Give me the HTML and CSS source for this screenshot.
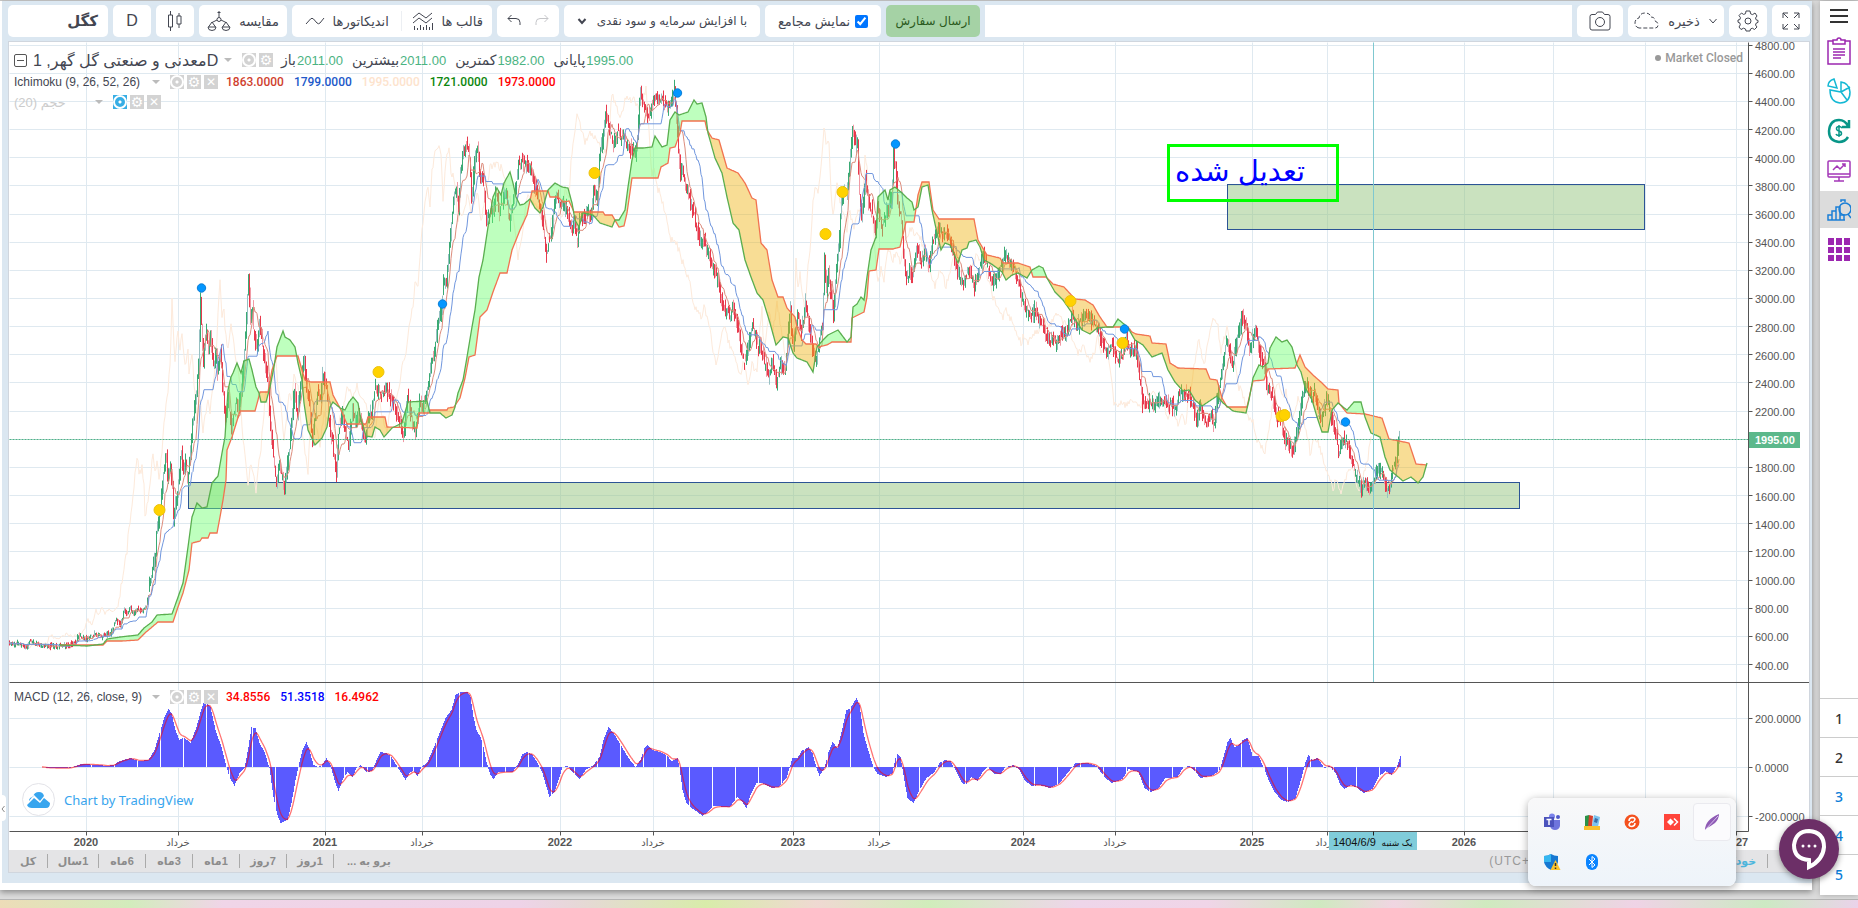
FILE: index.html
```
<!DOCTYPE html>
<html lang="fa">
<head>
  <meta charset="UTF-8">
  <meta name="viewport" content="width=device-width, initial-scale=1.0">
  <title>کگل</title>
  <link rel="stylesheet" href="styles.css">
</head>
<body>
  <div class="desk">
    <main class="window">
      <div class="tv">
        <header class="toolbar">
          <button class="tool symbol" dir="rtl">کگل</button>
          <button class="tool square interval">D</button>
          <button class="tool square" aria-label="candles">
            <svg width="16" height="22" viewBox="0 0 16 22"><path d="M3.500 1v4M3.500 17v4M1.500 5h4v12h-4zM12 3v3M12 14v4M10 6h4v8h-4z"/></svg>
          </button>
          <button class="tool compare">
            <svg width="24" height="22" viewBox="0 0 24 22"><circle cx="12" cy="9.500" r="2"/><path d="M12 1v6.500M10.500 2.500h3M10 10l-5 2.500M14 10l5 2.500M5 12l-3.500 5M5 12l3.500 5M19 12l-3.500 5M19 12l3.500 5M1 17h8a4 3.500 0 0 1-8 0zM15 17h8a4 3.500 0 0 1-8 0z"/></svg>
            <span dir="rtl">مقایسه</span>
          </button>
          <div class="tool pair">
            <button>
              <svg width="20" height="12" viewBox="0 0 20 12"><path d="M1 9l4.500-5q1.500-1.500 3 0l3.500 4q1.500 1.500 3 0l4-5"/></svg>
              <span dir="rtl">اندیکاتورها</span>
            </button>
            <button class="templates">
              <svg width="22" height="20" viewBox="0 0 22 20"><path d="M1 7l6-5 7 5 6-5M1 12l6-5 7 5 6-5M2.500 15v4M5.500 17v2M8.500 14v5M11.500 16v3M14.500 14v5M17.500 16v3M20.500 12v7"/></svg>
              <span dir="rtl">قالب ها</span>
            </button>
          </div>
          <div class="tool history">
            <button aria-label="undo"><svg width="14" height="12" viewBox="0 0 14 12"><path d="M4.500 1L1 4.500 4.500 8M1 4.500h8q4 0 4 4V11"/></svg></button>
            <button aria-label="redo" class="faded"><svg width="14" height="12" viewBox="0 0 14 12"><path d="M9.500 1L13 4.500 9.500 8M13 4.500H5q-4 0-4 4V11"/></svg></button>
          </div>
          <div class="tool adjust">
            <svg width="10" height="8" viewBox="0 0 10 8"><path class="thick" d="M1.500 2L5 6l3.500-4"/></svg>
            <select dir="rtl" aria-label="تعدیل"><option>با افزایش سرمایه و سود نقدی</option></select>
          </div>
          <label class="tool check" dir="rtl"><input type="checkbox" checked><span>نمایش مجامع</span></label>
          <button class="tool order" dir="rtl">ارسال سفارش</button>
          <div class="filler"></div>
          <button class="tool camera" aria-label="camera">
            <svg width="22" height="20" viewBox="0 0 22 20"><path d="M3 3.500h3.500l2-2.500h5l2 2.500H19q2 0 2 2V17q0 2-2 2H3q-2 0-2-2V5.500q0-2 2-2z"/><circle cx="11" cy="11" r="4.500"/></svg>
          </button>
          <button class="tool save">
            <svg width="26" height="18" viewBox="0 0 26 18"><path stroke-dasharray="4 2" d="M5 16q-4-1-4-5t4-5q1-5 6-5 5 0 6 4 4 0 4 4 3 1 3 4t-3 3z"/></svg>
            <span dir="rtl">ذخیره</span>
            <svg width="10" height="8" viewBox="0 0 10 8"><path d="M1.500 2L5 6l3.500-4"/></svg>
          </button>
          <button class="tool square" aria-label="settings">
            <svg width="22" height="22" viewBox="0 0 22 22"><circle cx="11" cy="11" r="3"/><path d="M9 1h4l.6 2.800 2 .8L18 3l2 3-1.500 2 .8 2 1.700.4v2l-1.700.6-.8 2L20 17l-2.500 2.500-2.200-1.300-1.800.8L13 21H9l-.5-2-2-.8L4 19.500 2 17l1.300-2.200-.6-2L1 12.200V10l1.800-.4.7-1.800L2 5.500 4.500 3l2 1.400 2-.7z"/></svg>
          </button>
          <button class="tool square" aria-label="fullscreen">
            <svg width="18" height="18" viewBox="0 0 18 18"><path d="M1 6V1h5M1 1l5 5M12 1h5v5M17 1l-5 5M1 12v5h5M1 17l5-5M17 12v5h-5M17 17l-5-5"/></svg>
          </button>
        </header>

        <section class="chart">
          <div class="plot">
            <svg id="plot"></svg>

            <div class="legend legend-main">
              <div class="row title">
                <button class="fold" aria-label="fold"></button>
                <span class="name">معدنی و صنعتی گل گهر, 1D</span>
                <i class="caret"></i>
                <span class="chips"><button class="chip eye" aria-label="show"></button><button class="chip gear" aria-label="settings"></button></span>
                <span class="ohlc"><span>باز</span><b>2011.00</b></span>
                <span class="ohlc"><span>بیشترین</span><b>2011.00</b></span>
                <span class="ohlc"><span>کمترین</span><b>1982.00</b></span>
                <span class="ohlc"><span>پایانی</span><b>1995.00</b></span>
              </div>
              <div class="row study">
                <span class="name">Ichimoku (9, 26, 52, 26)</span>
                <i class="caret"></i>
                <span class="chips"><button class="chip eye" aria-label="show"></button><button class="chip gear" aria-label="settings"></button><button class="chip close" aria-label="remove"></button></span>
                <span class="values"><b class="tenkan">1863.0000</b><b class="kijun">1799.0000</b><b class="chikou">1995.0000</b><b class="span-a">1721.0000</b><b class="span-b">1973.0000</b></span>
              </div>
              <div class="row study volume">
                <span class="name">حجم (20)</span>
                <i class="caret"></i>
                <span class="chips"><button class="chip eye on" aria-label="show"></button><button class="chip gear" aria-label="settings"></button><button class="chip close" aria-label="remove"></button></span>
              </div>
            </div>

            <div class="market">Market Closed</div>

            <div class="legend legend-macd">
              <div class="row study">
                <span class="name">MACD (12, 26, close, 9)</span>
                <i class="caret"></i>
                <span class="chips"><button class="chip eye" aria-label="show"></button><button class="chip gear" aria-label="settings"></button><button class="chip close" aria-label="remove"></button></span>
                <span class="values"><b class="span-b">34.8556</b><b class="line">51.3518</b><b class="span-b">16.4962</b></span>
              </div>
            </div>

            <a class="brand" href="#">
              <span class="logo"><svg width="24" height="16" viewBox="0 0 24 16"><path d="M5 16q-4 0-5-3l7-7 6 5 4-5 6 5q0 5-4 5z" fill="#38a5ee"/><path d="M2 8q1-3 4-3 1-5 6-5 4 0 5 4l-4 5-6-6-5 6z" fill="#38a5ee"/></svg></span>
              Chart by TradingView
            </a>
          </div>

          <footer class="ranges">
            <button dir="rtl">کل</button>
            <button dir="rtl">1سال</button>
            <button dir="rtl">6ماه</button>
            <button dir="rtl">3ماه</button>
            <button dir="rtl">1ماه</button>
            <button dir="rtl">7روز</button>
            <button dir="rtl">1روز</button>
            <button dir="rtl">برو به ...</button>
            <span class="zone">(UTC+</span>
            <button class="auto" dir="rtl">خودکار</button>
          </footer>
        </section>
      </div>
      <button class="handle" aria-label="panel"><svg width="4" height="8" viewBox="0 0 4 8"><path d="M3.500 1L1 4l2.500 3"/></svg></button>
    </main>

    <aside class="side">
      <nav class="apps">
        <a href="#" class="menu" aria-label="menu"><svg width="18" height="16" viewBox="0 0 18 16"><path stroke="#333" stroke-width="2" d="M0 2h18M0 8h18M0 14h18"/></svg></a>
        <a href="#" aria-label="orders"><svg width="24" height="28" viewBox="0 0 24 28"><path stroke="#9c27b0" stroke-width="1.500" d="M6 4H1v23h22V4h-5M6 7V3h4q0-2 2-2t2 2h4v4zM6 12h12M6 15h12M6 18h12M6 21h8"/></svg></a>
        <a href="#" aria-label="portfolio"><svg width="24" height="26" viewBox="0 0 24 26"><path stroke="#14b8d4" stroke-width="1.500" d="M10 10L7 1Q1 3 1 8zM14 4v10L3 12q0 12 10 13 10 0 10-11Q22 5 14 4zM14 14l9-5M14 14l6 8"/></svg></a>
        <a href="#" aria-label="cash"><svg width="24" height="26" viewBox="0 0 24 26"><path stroke="#089688" stroke-width="2.500" d="M21 19q-3 5-9 5-10-1-10-11Q3 2 12 2q6 0 9 6M22 2v7h-7"/><path stroke="#089688" stroke-width="1.500" d="M15 10q-1-1.500-3-1.500-2.500 0-2.500 2t2.500 2.500 2.500 2.500-2.500 2-3-1.500M12 7v12"/></svg></a>
        <a href="#" aria-label="monitor"><svg width="24" height="22" viewBox="0 0 24 22"><path stroke="#a437b8" stroke-width="1.500" d="M2 1h20q1 0 1 1v14q0 1-1 1H2q-1 0-1-1V2q0-1 1-1zM1 14h22M12 17v4M7 21h10M6 10l4-4 3 3 5-5M15 4h3v3"/></svg></a>
        <a href="#" class="active" aria-label="analysis"><svg width="24" height="22" viewBox="0 0 24 22"><path stroke="#1b7fd6" stroke-width="1.500" d="M1 21v-5h4v5zM5 21v-9h4v9zM9 21V8h4v13zM13 16h4v5h-4zM1 21h17M14 3V1h4v2M21 15l3 4"/><circle cx="18" cy="10" r="6" stroke="#1b7fd6" stroke-width="1.500"/></svg></a>
        <a href="#" aria-label="grid"><svg width="24" height="24" viewBox="0 0 24 24"><path fill="#9c27b0" stroke="none" d="M1 0h6v7H1zM9 0h6v7H9zM17 0h6v7h-6zM1 9h6v6H1zM9 9h6v6H9zM17 9h6v6h-6zM1 17h6v6H1zM9 17h6v6H9zM17 17h6v6h-6z"/></svg></a>
      </nav>
      <nav class="pages"><a href="#" class="dark">1</a><a href="#" class="dark">2</a><a href="#">3</a><a href="#">4</a><a href="#">5</a></nav>
    </aside>
  </div>
  <div class="wallpaper"></div>

  <div class="tray">
    <button aria-label="teams"><svg width="18" height="18" viewBox="0 0 18 18"><circle cx="9" cy="3.500" r="3" fill="#7b83eb"/><circle cx="15" cy="4" r="2" fill="#5059c9"/><path d="M7 7h10v6q-1 4-5 4t-5-4z" fill="#6e75dc"/><path d="M1 4h10v10H1z" fill="#4b53bc"/><path d="M3.500 6.500h5M6 6.500V12" stroke="#fff" stroke-width="1.500"/></svg></button>
    <button aria-label="cards"><svg width="18" height="18" viewBox="0 0 18 18"><path d="M2 3l4-1v11H2z" fill="#2b9348"/><path d="M6 2l4 1-1 11H5z" fill="#d8402c"/><path d="M11 2l6 2-2 10-6-1z" fill="#7cc3ee"/><path d="M12 5l3 1-1 4-3-1z" fill="#3a6ea8"/><path d="M1 13h16v4H1z" fill="#f9c02c"/></svg></button>
    <button aria-label="sync"><svg width="18" height="18" viewBox="0 0 18 18"><circle cx="9" cy="9" r="7.500" fill="#f4511e"/><path d="M6 8q0-3 3-3.500 3 0 3 2Q11 9 9 9.500M12 10q0 3-3 3.500-3 0-3-2Q7 9 9 8.500" fill="none" stroke="#fff" stroke-width="1.500"/></svg></button>
    <button aria-label="remote"><svg width="18" height="18" viewBox="0 0 18 18"><path d="M1 1h16v16H1z" fill="#ff443a"/><path d="M7.500 5.500L11 9l-3.500 3.500L4 9z" fill="#fff"/><path d="M11 5.500L14.500 9 11 12.500" fill="none" stroke="#fff" stroke-width="1.500"/></svg></button>
    <button class="hot" aria-label="feather"><svg width="18" height="18" viewBox="0 0 18 18"><path d="M2 17Q2 7 16 1q0 5-4 9-4 3-8 5z" fill="#8e5bb5"/><path d="M2 17L15 3" stroke="#d9c0ee"/></svg></button>
    <button aria-label="security"><svg width="18" height="18" viewBox="0 0 18 18"><path d="M8 1q3 2 7 2v6q-1 5-7 8-6-3-7-8V3q4 0 7-2z" fill="#1678d2"/><path d="M8 1v8H1V3q4 0 7-2z" fill="#35b6f0"/><path d="M12.500 7l5 10h-10z" fill="#fdc42b"/><path d="M12.500 10v3M12.500 14.500V16" stroke="#333" stroke-width="1.500"/></svg></button>
    <button aria-label="bluetooth"><svg width="18" height="18" viewBox="0 0 18 18"><rect x="3" y="1" width="12" height="16" rx="6" fill="#0a84ff"/><path d="M6 6l6 6-3 2.500v-11L12 6l-6 6" fill="none" stroke="#fff"/></svg></button>
  </div>

  <button class="chat" aria-label="chat">
    <svg width="40" height="44" viewBox="0 0 40 44"><path d="M20 4q15 1 15 16-1 13-15 20v-7Q5 32 5 18 7 4 20 4z" fill="none" stroke="#fff" stroke-width="4"/><g fill="#fff"><circle cx="14" cy="19" r="1.500"/><circle cx="20" cy="19" r="1.500"/><circle cx="26" cy="19" r="1.500"/></g></svg>
  </button>

  <script src="chart.js"></script>
</body>
</html>
```
FILE: styles.css
```
* {
  box-sizing: border-box;
}

body {
  margin: 0;
  height: 100vh;
  display: flex;
  flex-direction: column;
  overflow: hidden;
  background: #ccc;
  font-family: "Liberation Sans", "DejaVu Sans", sans-serif;
  color: #434651;
}

button {
  padding: 0;
  border: 0;
  background: none;
  color: inherit;
  font: inherit;
  cursor: pointer;
}

.desk {
  flex: 1;
  min-height: 0;
  margin-top: 1px;
  display: flex;
  gap: 8px;
  background: #dcdcdc;
  border-bottom: 1px solid #b5b5b5;
}

.window {
  position: relative;
  flex: 1;
  min-width: 0;
  display: flex;
  margin-bottom: 9px;
  padding: 0 0 7px 2px;
  background: #fff;
  box-shadow: 0 2px 6px rgba(0, 0, 0, 0.4);
}

.tv {
  flex: 1;
  min-width: 0;
  display: flex;
  flex-direction: column;
  gap: 4px;
  padding: 4px 2px 10px 6px;
  background: #dbe7f1;
}

/* toolbar */
.toolbar {
  display: flex;
  gap: 5px;
  height: 32px;
  font-size: 13px;
}

.toolbar svg {
  flex: none;
  fill: none;
  stroke: #434651;
}

.toolbar .thick {
  stroke-width: 2;
}

.tool {
  display: flex;
  align-items: center;
  justify-content: center;
  gap: 8px;
  background: #fff;
  border-radius: 5px;
  white-space: nowrap;
}

.square {
  width: 38px;
}

.symbol {
  width: 100px;
  padding-right: 10px;
  justify-content: flex-start;
  font-size: 15px;
  font-weight: bold;
}

.interval {
  font-size: 16px;
}

.compare {
  width: 88px;
}

.pair {
  width: 200px;
  gap: 0;
}

.pair button {
  display: flex;
  flex: 11;
  align-items: center;
  justify-content: center;
  gap: 8px;
}

.pair .templates {
  flex: 9;
  border-left: 1px solid #eceff3;
}

.history {
  width: 62px;
  gap: 14px;
}

.faded {
  opacity: 0.3;
}

.adjust {
  width: 196px;
  font-size: 12px;
}

.adjust select {
  appearance: none;
  width: 152px;
  padding: 0;
  border: 0;
  background: none;
  color: inherit;
  font: inherit;
}

.check {
  width: 116px;
  gap: 5px;
}

.check input {
  margin: 0;
}

.order {
  width: 94px;
  background: #a5d2a5;
  color: #2b5a20;
  font-size: 12px;
}

.filler {
  flex: 1;
  background: #fff;
}

.camera {
  width: 46px;
}

.save {
  width: 96px;
}

/* chart */
.chart {
  flex: 1;
  min-height: 0;
  display: flex;
  flex-direction: column;
  border: 1px solid #d0d6de;
  background: #fff;
}

.plot {
  position: relative;
  flex: 1;
  min-height: 0;
}

#plot {
  display: block;
  width: 100%;
  height: 100%;
  font-size: 11px;
}

.legend {
  position: absolute;
  left: 5px;
}

.legend-main {
  top: 6px;
}

.legend-macd {
  top: 645px;
}

.row {
  display: flex;
  align-items: center;
  height: 20px;
  font-size: 12px;
  white-space: nowrap;
}

.title {
  height: 24px;
  font-size: 16px;
}

.title .name {
  width: 187px;
  margin-left: 6px;
}

.study .name {
  width: 134px;
}

.volume .name {
  width: 77px;
}

.volume {
  color: #ccc;
  font-size: 13px;
}

.fold {
  width: 13px;
  height: 13px;
  border: 1px solid #555;
  border-radius: 2px;
  background: linear-gradient(#555, #555) center / 7px 1px no-repeat;
}

.caret {
  margin: 0 10px 0 4px;
  border: 4px solid transparent;
  border-top-color: #bbb;
  border-bottom: 0;
}

.chips {
  display: flex;
  gap: 3px;
  margin-right: 8px;
}

.chip {
  display: grid;
  place-items: center;
  width: 14px;
  height: 14px;
  background: #d3d3d3;
}

.chip.on {
  background: #37aee5;
}

.eye::before {
  content: "";
  width: 10px;
  height: 10px;
  border: 2px solid #fff;
  border-radius: 50%;
  background: radial-gradient(circle, #fff 1px, transparent 2px);
}

.gear::before,
.close::before {
  content: "⚙";
  color: #fff;
  font: bold 14px/14px "DejaVu Sans", sans-serif;
}

.close::before {
  content: "✕";
  font-size: 12px;
}

.ohlc {
  display: flex;
  align-items: center;
  gap: 1px;
  margin-right: 9px;
  font-size: 13px;
}

.ohlc span {
  font-size: 14px;
}

.ohlc b {
  color: #4bb382;
  font-weight: normal;
}

.values {
  display: flex;
  gap: 10px;
  font-size: 12px;
}

.values b {
  font-family: Roboto, sans-serif;
  font-weight: 500;
}

.tenkan { color: #cf3f2e; }
.kijun { color: #2158c9; }
.chikou { color: #fde3cd; }
.span-a { color: #0d860d; }
.span-b { color: #f00; }
.line { color: #00f; }

.market {
  position: absolute;
  top: 9px;
  right: 66px;
  color: #999;
  font: 500 12px Roboto, sans-serif;
}

.market::before {
  content: "";
  display: inline-block;
  width: 6px;
  height: 6px;
  margin-right: 4px;
  border-radius: 50%;
  background: #999;
  vertical-align: 1px;
}

.brand {
  position: absolute;
  left: 13px;
  bottom: 34px;
  display: flex;
  align-items: center;
  gap: 9px;
  color: #38a5ee;
  font: 13px "Noto Sans", sans-serif;
  text-decoration: none;
}

.logo {
  display: grid;
  place-items: center;
  width: 33px;
  height: 33px;
  border: 1px solid #e3e3e8;
  border-radius: 50%;
  background: #fff;
}

.ranges {
  display: flex;
  align-items: center;
  height: 22px;
  background: #e4e4e6;
  color: #8c8c8c;
  font-size: 11px;
  font-weight: bold;
}

.ranges button {
  height: 14px;
  width: 47px;
  border-right: 1px solid #aaa;
  line-height: 14px;
}

.ranges button:first-child {
  width: 39px;
}

.ranges button:nth-child(2) {
  width: 51px;
}

.ranges button:nth-child(8) {
  width: 70px;
  border: 0;
}

.ranges .zone {
  margin: 0 188px 0 auto;
  color: #999;
  font-size: 12px;
  font-weight: normal;
  letter-spacing: 1px;
}

.ranges .auto {
  width: 50px;
  margin-right: 41px;
  padding-right: 10px;
  color: #4db6dd;
}

.handle {
  position: absolute;
  left: 0;
  bottom: 69px;
  width: 6px;
  height: 26px;
  background: #fff;
  border-radius: 0 4px 4px 0;
}

.handle svg {
  fill: none;
  stroke: #888;
}

/* right bar */
.side {
  width: 38px;
  display: flex;
  flex-direction: column;
  justify-content: space-between;
  margin-bottom: 4px;
  background: #fff;
  box-shadow: 0 0 6px rgba(0, 0, 0, 0.25);
}

.side a {
  display: grid;
  place-items: center;
}

.apps a {
  height: 40px;
}

.apps .menu {
  height: 30px;
}

.apps .active {
  height: 37px;
  background: #dcdcdc;
}

.apps svg {
  fill: none;
}

.apps a:last-child {
  height: 44px;
}

.pages {
  padding-bottom: 2px;
}

.pages a {
  height: 39px;
  border-top: 1px solid #ccc;
  color: #0d7fd8;
  font: 500 14px "Noto Sans", sans-serif;
  text-decoration: none;
}

.pages .dark {
  color: #333;
}

.wallpaper {
  height: 8px;
  background: linear-gradient(90deg, #eddcb8, #d2ecbc 7%, #f0d5e8 12%, #eed3e8 28%, #e6d8d8 31%, #d8ecaa 38%, #efd9d2 44%, #d0edbb 50%, #eed6ea 58%, #f0d5e8 65%, #cfe9c0 71%, #f0d6e2 75%, #cfeabf 80%, #efd3e6 88%, #cce9c3 95%, #ead3ea);
}

/* over the page */
.tray {
  position: fixed;
  right: 122px;
  bottom: 22px;
  display: grid;
  grid-template-columns: repeat(5, 40px);
  grid-auto-rows: 40px;
  padding: 4px;
  border-radius: 8px;
  background: linear-gradient(#f8f8f9, #eef4fa);
  box-shadow: 0 2px 8px rgba(0, 0, 0, 0.35);
}

.tray button {
  display: grid;
  place-items: center;
  margin: 1px;
  border-radius: 4px;
}

.tray .hot {
  border: 1px solid #eaeaef;
  background: #fbfbfd;
}

.chat {
  position: fixed;
  right: 19px;
  bottom: 29px;
  display: grid;
  place-items: center;
  width: 60px;
  height: 60px;
  border-radius: 50%;
  background: #6c2f67;
  box-shadow: 0 2px 6px rgba(0, 0, 0, 0.4);
}

#plot text {
  fill: #555;
}

#plot .bold {
  font-weight: bold;
}

#plot .month {
  font-size: 10px;
}

#plot .note {
  fill: #00f;
  font-size: 29px;
}

#plot .last {
  fill: #fff;
  font-weight: bold;
}

#plot .cursor {
  fill: #111;
}

#plot .day {
  fill: #111;
  font-size: 9px;
}
```
FILE: chart.js
```
const svg = document.getElementById('plot');

// series points: x,y pairs on the base grid (BASE)
const BASE = { x: 9, y: 42, w: 1800, h: 808 };

const parse = (s) => s.trim().split(/\s+/).map((p) => p.split(',').map(Number));

const price = parse(`9,644 20,644 27,647 30,641 40,645 57,647 67,645 76,643 79,635 87,639 95,634 102,637 112,632 117,620 121,625 125,610 128,615 131,607 134,615 138,608 142,612 147,605 150,587 153,567 156,552 157,533 159,523 163,490 164,470 167,457 168,477 171,467 173,487 174,520 177,500 180,473 182,453 184,473 186,463 188,480 191,453 193,420 196,400 199,367 201,300 202,327 204,363 207,330 209,350 211,330 214,367 217,350 218,377 221,353 223,383 226,420 229,400 232,430 237,397 239,410 242,387 244,367 246,340 248,293 249,277 251,317 253,307 254,330 257,350 260,323 263,347 267,373 269,387 271,427 273,447 275,467 277,483 280,463 283,480 285,490 287,470 290,447 293,413 295,387 298,417 301,383 305,360 307,387 310,407 313,440 315,420 318,393 321,400 323,377 327,383 329,417 332,437 334,453 337,473 339,430 343,413 345,427 349,447 353,413 356,423 358,410 362,427 366,440 368,420 372,410 376,383 378,390 382,397 386,387 391,397 395,407 399,420 404,437 408,400 413,423 416,435
420,403 425,403 428,387 432,360 435,353 438,327 442,307 444,280 447,290 449,257 452,220 454,200 457,187 459,207 461,173 464,153 468,143 470,157 472,200 475,163 478,147 480,170 483,180 485,197 487,223 490,213 493,213 497,193 500,213 504,197 507,193 510,223 513,203 517,180 519,167 523,163 527,165 532,170 534,180 537,193 540,203 543,220 545,237 547,257 549,243 552,233 556,197 558,197 562,203 565,207 569,213 573,233 575,220 578,243 580,217 584,220 588,210 592,217 594,190 598,200 600,157 603,140 606,110 610,127 614,143 618,133 622,137 627,143 632,150 636,153 638,133 641,92 643,100 647,110 650,117 653,103 655,100 658,100 663,98 668,108 672,100 675,90 677,113 679,150 681,173 683,170 686,187 689,193 693,207 697,223 700,243 703,237 708,250 713,267 718,280 723,307 730,317 733,307 738,323 743,357 745,363 749,343 753,327 757,340 762,353 767,367 769,377 773,360 777,383 781,363 786,373 788,340 791,310
792,333 794,347 798,313 802,330 806,303 810,327 814,353 817,363 820,337 823,327 825,257 827,290 829,273 834,313 837,263 840,240 842,197 845,187 847,193 850,167 853,130 856,147 858,143 860,193 862,217 866,180 869,200 873,213 876,230 878,210 883,227 887,213 892,200 894,153 896,167 898,197 902,223 904,253 907,280 910,270 913,280 917,247 922,260 925,253 930,263 933,240 940,230 944,233 948,233 953,250 957,267 960,277 964,287 969,267 975,287 980,267 984,253 988,267 993,283 998,277 1005,257 1008,260 1015,270 1018,283 1023,300 1028,313 1032,317 1035,310 1040,320 1045,330 1050,343 1053,335 1056,343 1062,335 1067,330 1072,317 1077,327 1082,320 1087,313 1092,323 1097,327 1102,340 1107,353 1113,347 1118,360 1123,353 1127,337 1130,353 1137,350 1140,377 1142,393
1143,403 1150,403 1155,405 1163,400 1168,403 1176,407 1180,393 1185,395 1189,392 1193,407 1197,420 1200,407 1203,413 1207,423 1210,413 1215,423 1217,403 1220,387 1223,367 1227,340 1230,350 1233,367 1238,337 1243,317 1247,327 1250,353 1253,340 1256,327 1260,350 1265,370 1268,387 1273,397 1277,417 1282,423 1285,437 1288,443 1294,453 1297,433 1300,417 1303,397 1307,383 1312,397 1315,390 1318,407 1322,420 1327,397 1332,417 1337,437 1339,453 1343,440 1347,443 1352,460 1357,477 1362,487 1365,482 1371,493 1374,480 1378,470 1383,473 1387,490 1390,490 1393,470 1397,460 1399,440`);

const spanA = parse(`60,645 87,646 103,644 107,639 120,637 138,635 144,628 152,622 157,615 172,614 177,600 183,583 188,547 192,517 197,503 202,508 207,507 212,483 218,476 222,453 225,437 228,390 231,377 233,373 237,363 241,373 244,361 249,359 252,370 256,387 259,393 261,402 266,402 270,387 274,367 277,347 283,331 285,337 290,340 295,347 298,363 302,380 304,403 308,430 315,445 322,438 327,427 330,407 333,402 340,408 345,410 349,402 353,397 358,403 361,420 366,436 372,437 375,427 380,430 384,437 392,428 402,423 408,402 427,401 430,413 440,413 446,418 452,415 455,407 458,393 463,380 467,357 472,327 475,310 479,277 483,260 488,227 493,197 497,188 501,195 504,183 510,172 513,183 516,197 520,205 524,204 530,199 535,208 540,213 543,207 548,190 555,183 562,187 568,188 572,203 575,220 579,227 583,213 593,215 600,223 612,227 615,220 619,220 625,210 628,187 632,160 635,148 643,148 652,147 655,136 662,147 667,145 670,120 675,112 679,115 688,112 694,100 697,104 702,103 706,117 708,133 715,158 722,173 727,197 733,223 739,230 745,260 751,277 757,293 763,300 770,323 776,345 783,337 788,338 793,353
797,358 807,362 813,372 817,347 823,340 828,335 838,330 847,342 851,337 853,307 857,304 861,297 864,300 867,277 871,250 876,237 878,197 885,190 888,200 890,190 895,187 902,193 907,198 912,202 914,210 918,207 922,187 928,185 932,210 937,233 941,250 945,243 950,245 958,263 962,250 967,248 969,242 976,240 980,247 984,260 990,263 997,268 1002,272 1006,280 1012,275 1018,273 1027,278 1032,270 1039,266 1043,268 1047,278 1055,292 1063,300 1070,310 1077,322 1082,330 1090,334 1097,328 1107,327 1113,327 1118,319 1125,325 1128,328 1135,340 1143,345 1152,357 1162,353 1168,370 1175,382 1183,391 1189,390 1195,400 1202,406 1217,396 1223,403 1233,411 1246,413 1249,400 1253,378 1259,365 1263,367 1268,363 1270,348 1276,337 1282,342 1287,340 1292,347 1297,365 1301,372 1305,387 1312,400 1317,417 1322,432 1328,432 1332,410 1338,403 1347,410 1354,402 1361,402 1365,417 1371,433 1380,437 1385,457 1390,470 1403,481 1411,477 1418,483 1423,477 1427,463`);

const spanB = parse(`60,645 103,645 107,641 122,641 138,640 145,633 152,627 158,622 173,622 178,607 183,593 189,570 192,543 200,541 202,538 208,538 210,533 217,533 220,517 223,500 226,480 227,450 232,437 240,411 255,411 258,400 260,392 268,392 272,370 277,356 298,356 302,370 305,380 311,382 330,382 333,395 340,408 347,424 366,424 368,417 385,417 387,427 417,428 419,413 429,413 430,410 447,410 448,408 454,407 460,398 465,378 469,357 475,355 480,317 487,310 493,292 500,273 507,273 512,250 520,230 527,215 532,191 548,191 550,197 558,197 563,202 569,201 574,212 603,212 605,215 612,215 619,227 624,226 627,213 632,178 658,178 661,167 668,163 670,148 675,147 680,133 682,121 705,121 707,130 712,138 719,140 727,168 738,173 745,183 752,198 756,200 761,243 767,250 772,280 778,297 783,297 787,308 795,317
797,327 802,340 806,344 816,344 818,347 827,345 832,342 851,342 852,318 858,315 864,312 867,297 869,271 876,270 879,249 893,249 900,247 906,222 914,222 918,195 922,182 929,182 933,210 939,219 974,219 978,240 987,255 1000,258 1003,263 1018,263 1030,267 1033,277 1046,277 1053,284 1064,287 1075,299 1085,300 1093,305 1100,317 1107,327 1128,327 1132,332 1136,334 1150,336 1152,343 1166,344 1170,363 1178,368 1206,369 1210,379 1217,380 1222,398 1227,407 1247,407 1253,381 1264,380 1268,369 1295,368 1300,355 1305,367 1313,375 1322,383 1328,389 1338,390 1339,403 1347,413 1365,414 1382,418 1389,439 1409,443 1416,464 1427,465`);

const macd = parse(`42,767 47,768 69,768 81,764 101,765 105,766 113,765 119,761 130,758 138,761 148,760 154,750 160,730 164,717 168,709 171,713 175,730 179,740 183,737 190,743 196,727 200,712 204,700 210,707 215,730 221,747 225,763 229,777 234,786 239,773 244,768 248,747 251,727 255,728 259,743 264,752 269,768 273,797 277,815 280,823 287,820 291,803 295,780 299,762 302,750 306,742 309,750 313,765 318,767 322,764 326,758 330,765 334,780 338,791 342,780 347,772 352,777 356,768 360,765 367,773 372,770 376,760 380,752 386,753 391,757 397,767 401,773 405,780 409,773 413,770 417,776 421,767 427,762 433,748 439,733 445,718 451,710 455,695 459,692 467,692 470,697 473,717 476,730 480,737 483,747 486,762 490,775 493,779 498,772 504,772 512,772 518,763 522,754 527,752 532,755 537,763 542,773 546,787 549,797 554,792 558,780 562,767 567,766 573,773 579,779 585,770 593,765 599,757 603,740 608,727 613,733 619,743
622,748 628,758 635,767 640,760 644,748 647,745 652,750 660,752 667,756 671,761 677,758 679,767 682,790 686,803 691,808 697,812 702,816 707,812 713,806 729,807 737,797 742,802 746,808 750,795 756,783 762,783 771,788 778,787 786,778 789,768 792,758 797,758 801,751 808,747 812,753 816,768 819,776 824,768 828,752 832,742 837,748 841,732 846,710 850,708 856,698 859,705 863,733 867,748 873,767 877,774 886,777 892,773 896,753 900,757 903,775 907,798 913,803 919,790 926,778 934,772 939,763 944,760 950,761 956,772 961,782 965,785 971,777 977,781 982,772 987,767 994,774 1000,774 1005,767 1013,765 1019,770 1024,780 1031,786 1039,785 1050,788 1059,783 1067,773 1075,763 1087,763 1096,766 1104,777 1111,783 1122,779 1128,769 1138,772 1144,788 1150,792 1158,788 1165,778 1177,777 1183,767 1189,766 1195,772 1200,778 1213,775 1219,770 1223,757 1227,742 1230,738 1234,747
1238,745 1242,740 1247,738 1252,756 1258,756 1263,767 1268,780 1274,792 1281,800 1287,802 1295,798 1301,778 1305,762 1308,755 1312,760 1317,758 1324,768 1329,766 1335,773 1340,785 1344,789 1350,785 1357,788 1363,793 1372,789 1378,777 1385,771 1391,775 1397,765 1400,756`);

const buys = parse('159,510 378,372 594,173 825,234 842,192 1070,301 1122,343 1281,416 1284,415');
const meetings = parse('201,288 442,304 677,93 895,144 1124,329 1345,422');

const times = [[86, '2020'], [178], [325, '2021'], [422], [560, '2022'], [653], [793, '2023'], [879], [1023, '2024'], [1115], [1252, '2025'], [1327], [1464, '2026'], [1553, ''], [1645, ''], [1736, '2027']];

// one value per bar
function sample(points) {
  const out = [];
  let i = 0;
  for (let x = points[0][0]; x <= points[points.length - 1][0]; x++) {
    while (i < points.length - 2 && points[i + 1][0] < x) i++;
    const [x0, y0] = points[i];
    const [x1, y1] = points[i + 1];
    out.push([x, y0 + (y1 - y0) * (x - x0) / (x1 - x0)]);
  }
  return out;
}

let seed = 7;
function random() {
  seed = (seed * 16807) % 2147483647;
  return seed / 2147483647;
}

function draw() {
  seed = 7;
  const kx = svg.clientWidth / BASE.w;
  const ky = svg.clientHeight / BASE.h;
  const X = (x) => +((x - BASE.x) * kx).toFixed(1);
  const Y = (y) => +((y - BASE.y) * ky).toFixed(1);
  const crisp = (v) => Math.floor(v) + 0.5;
  let html = '';

  const path = (d, stroke, fill = 'none', more = '') => {
    html += `<path d="${d}" stroke="${stroke}" fill="${fill}" ${more}/>`;
  };
  const line = (x1, y1, x2, y2, color, more = '') => {
    path(`M${crisp(X(x1))} ${crisp(Y(y1))}L${crisp(X(x2))} ${crisp(Y(y2))}`, color, 'none', more);
  };
  const text = (x, y, value, cls = '', anchor = 'start') => {
    html += `<text x="${X(x)}" y="${Y(y)}" class="${cls}" text-anchor="${anchor}">${value}</text>`;
  };
  const box = (x1, y1, x2, y2, fill, stroke, width = 1) => {
    html += `<rect x="${crisp(X(x1))}" y="${crisp(Y(y1))}" width="${Math.round(X(x2) - X(x1))}" height="${Math.round(Y(y2) - Y(y1))}" fill="${fill}" stroke="${stroke}" stroke-width="${width}"/>`;
  };
  const poly = (pts) => 'M' + pts.map(([x, y]) => `${X(x)} ${Y(y)}`).join('L');

  // grid
  const levels = [];
  for (let p = 4800; p >= 400; p -= 200) levels.push([p, 45 + (4800 - p) * 0.1408]);
  const macdLevels = [['200.0000', 718], ['0.0000', 767], ['-200.0000', 816]];
  levels.forEach(([, y]) => line(9, y, 1748, y, '#dfe9f0'));
  macdLevels.forEach(([, y]) => line(9, y, 1748, y, '#dfe9f0'));
  times.forEach(([x]) => line(x, 42, x, 831, '#dfe9f0'));

  // zones
  box(188, 482, 1519, 508, 'rgba(150,198,128,.5)', '#2c5495');
  box(1227, 184, 1644, 229, 'rgba(150,198,128,.5)', '#2c5495');

  // candles
  const bars = sample(price).map(([x, y], i, all) => {
    const size = y > 600 ? 3 : 8;
    const next = all[Math.min(i + 1, all.length - 1)][1];
    return { x, open: y + (random() - 0.5) * size, close: next + (random() - 0.5) * size, size };
  });
  bars.forEach((b) => {
    b.high = Math.min(b.open, b.close) - random() * b.size;
    b.low = Math.max(b.open, b.close) + random() * b.size;
  });

  // lagging span
  path(poly(bars.map((b) => [b.x - 28, b.close]).filter((p) => p[0] > 9)), '#fdeadb');

  const candles = { '#e8394c': '', '#f09aa5': '', '#3aaa74': '', '#96c0c2': '' };
  bars.forEach((b, i) => {
    const up = b.close < b.open;
    const soft = i % 3 === 1;
    const color = up ? (soft ? '#96c0c2' : '#3aaa74') : (soft ? '#f09aa5' : '#e8394c');
    candles[color] += `M${crisp(X(b.x))} ${Y(b.high)}V${Y(b.low)}`;
  });
  Object.entries(candles).forEach(([color, d]) => path(d, color));

  // moving midpoints
  const midpoint = (n) => bars.map((b, i) => {
    const part = bars.slice(Math.max(0, i - n + 1), i + 1);
    return [b.x, (Math.min(...part.map((p) => p.high)) + Math.max(...part.map((p) => p.low))) / 2];
  });
  path(poly(midpoint(9)), '#dd8d7d');
  path(poly(midpoint(26)), '#7197de');

  // cloud
  const a = sample(spanA);
  const b = sample(spanB);
  let start = 0;
  for (let i = 1; i <= a.length; i++) {
    const green = a[i - 1][1] < b[i - 1][1];
    if (i === a.length || (a[i][1] < b[i][1]) !== green) {
      const end = Math.min(i + 1, a.length);
      const shape = a.slice(start, end).concat(b.slice(start, end).reverse());
      path(poly(shape) + 'Z', 'none', green ? 'rgba(110,255,110,.45)' : 'rgba(240,180,20,.45)');
      start = i;
    }
  }
  path(poly(b), '#f27350', 'none', 'stroke-width="1.3"');
  path(poly(a), '#5aae4f', 'none', 'stroke-width="1.3"');

  // events
  buys.forEach(([x, y]) => { html += `<circle cx="${X(x) + 0.5}" cy="${Y(y)}" r="5.5" fill="#ffd200" stroke="#ecc20f"/>`; });
  meetings.forEach(([x, y]) => { html += `<circle cx="${X(x) + 0.5}" cy="${Y(y)}" r="4.2" fill="#0396ff" stroke="#0b7ed6"/>`; });

  // note
  box(1168, 145, 1337, 200, 'none', '#0f0', 3);
  text(1240, 181, 'تعدیل شده', 'note', 'middle');

  // last price and cursor
  line(9, 439, 1748, 439, '#4eb287', 'stroke-dasharray="2 1"');
  line(1373, 42, 1373, 682, '#7fc8d0');

  // macd
  let hist = '';
  const values = sample(macd);
  values.forEach(([x, y]) => {
    if (x % 23 !== 22) hist += `M${X(x)} ${Y(767)}H${X(x + 1)}V${Y(y)}H${X(x)}z`;
  });
  path(hist, 'none', '#5a5aff', 'shape-rendering="crispEdges"');
  let ema = values[0][1];
  path(poly(values.map(([x, y]) => [x, (ema += (y - ema) * 0.24)])), '#f00', 'none', 'opacity=".55" stroke-width="1.3"');

  // axes
  line(9, 682, 1809, 682, '#555');
  line(9, 831, 1748, 831, '#555');
  line(1748, 42, 1748, 831, '#555');
  levels.forEach(([p, y]) => {
    line(1748, y, 1752, y, '#555');
    if (p !== 2000) text(1755, y + 5, p.toFixed(2));
  });
  macdLevels.forEach(([v, y]) => {
    line(1748, y, 1752, y, '#555');
    text(1755, y + 5, v);
  });
  times.forEach(([x, label]) => {
    line(x, 831, x, 835, '#555');
    text(x, 846, label === undefined ? 'خرداد' : label, label ? 'bold' : 'month', 'middle');
  });
  box(1749, 432, 1799, 447, '#5cb88b', '#5cb88b');
  text(1755, 444, '1995.00', 'last');
  box(1329, 832, 1416, 849, '#80ccda', '#80ccda');
  line(1373, 831, 1373, 835, '#222');
  text(1333, 846, '1404/6/9', 'cursor');
  text(1397, 846, 'یک شنبه', 'day', 'middle');

  svg.innerHTML = html;
}

window.addEventListener('resize', draw);
draw();
```
